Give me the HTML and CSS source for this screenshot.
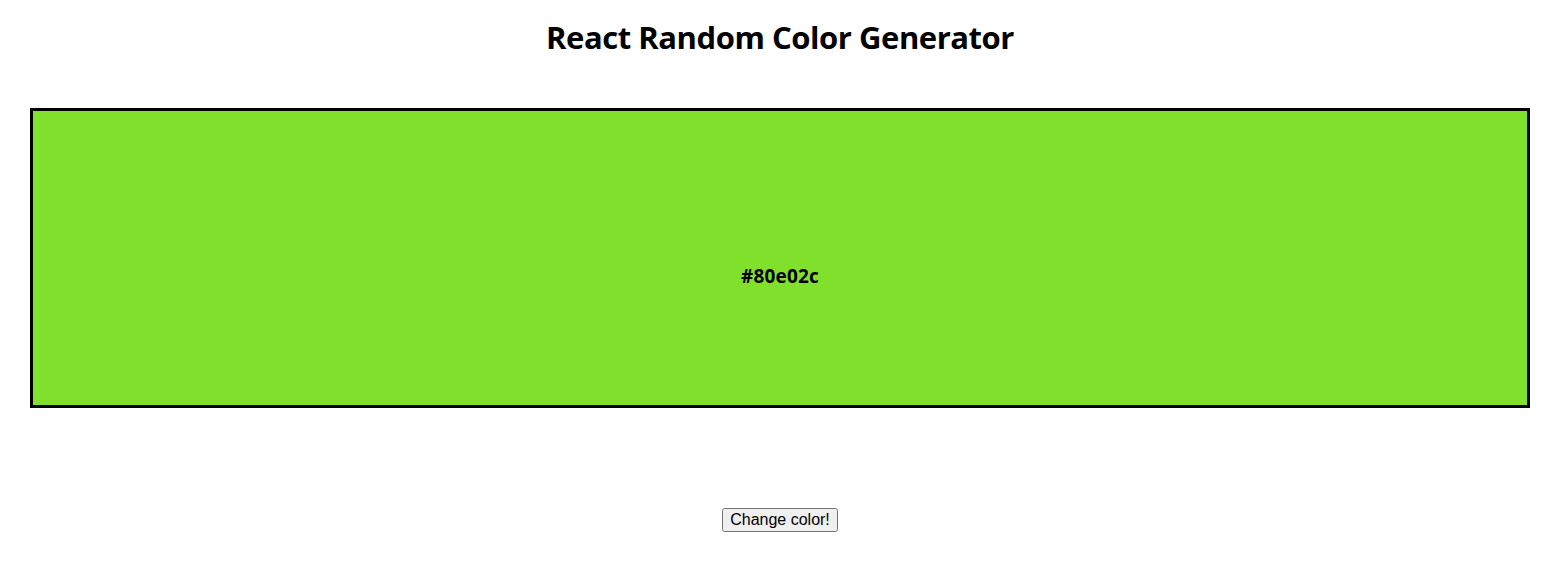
FILE: index.html
```html
<!DOCTYPE html>
<html>
<head>
<meta charset="utf-8">
<title>React Random Color Generator</title>
<link rel="stylesheet" href="styles.css">
</head>
<body>
<div class="app">
  <h1 class="title">React Random Color Generator</h1>
  <div class="swatch" style="background-color: #80e02c;">
    <span class="hex">#80e02c</span>
  </div>
  <div class="actions">
    <button class="change-btn" type="button">Change color!</button>
  </div>
</div>
</body>
</html>
```

FILE: styles.css
```css
html, body {
  margin: 0;
  padding: 0;
  background: #ffffff;
}

.app {
  width: 1560px;
  font-family: "Open Sans", "Noto Sans", sans-serif;
  color: #000;
  text-align: center;
  display: flex;
  flex-direction: column;
  align-items: center;
}

.title {
  margin: 17px 0 0;
  font-size: 31px;
  line-height: 41px;
  font-weight: 700;
  letter-spacing: -0.45px;
}

.swatch {
  box-sizing: border-box;
  width: 1500px;
  height: 300px;
  margin-top: 50px;
  border: 3px solid #000;
  display: flex;
  justify-content: center;
  padding-top: 153px;
}

.hex {
  font-size: 19px;
  line-height: 24px;
  font-weight: 700;
  letter-spacing: 0.2px;
}

.actions {
  margin-top: 100px;
}

.change-btn {
  font-family: "Liberation Sans", Arial, sans-serif;
  font-size: 16px;
  padding: 1px 6px;
}
```
